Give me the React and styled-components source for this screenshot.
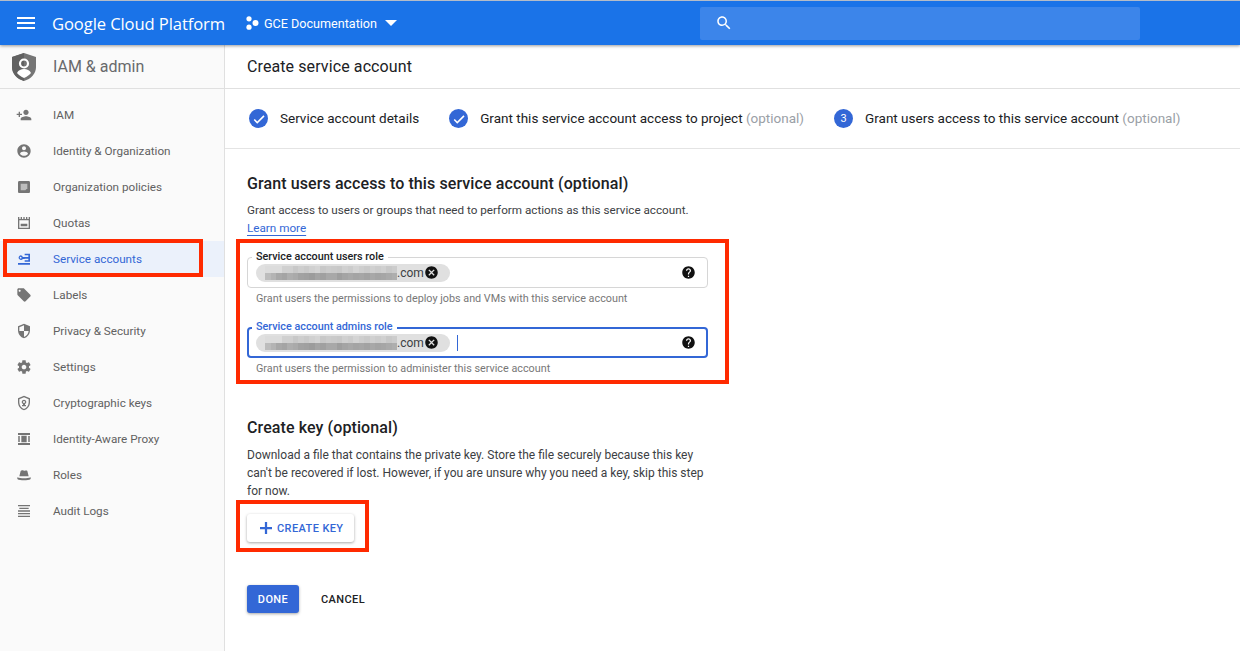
import React from "react";
import styled, { createGlobalStyle } from "styled-components";

const GlobalStyle = createGlobalStyle`
  html, body {
    margin: 0;
    padding: 0;
    background: #fff;
    font-family: Roboto, "Liberation Sans", sans-serif;
    color: #202124;
  }
  * {
    box-sizing: border-box;
  }
`;

const PATHS = {
  menu: "M3 18h18v-2H3v2zm0-5h18v-2H3v2zm0-7v2h18V6H3z",
  search:
    "M15.5 14h-.79l-.28-.27C15.41 12.59 16 11.11 16 9.5 16 5.91 13.09 3 9.5 3S3 5.91 3 9.5 5.91 16 9.5 16c1.61 0 3.09-.59 4.23-1.57l.27.28v.79l5 4.99L20.49 19l-4.99-5zm-6 0C7.01 14 5 11.99 5 9.5S7.01 5 9.5 5 14 7.01 14 9.5 11.99 14 9.5 14z",
  help: "M12 2C6.48 2 2 6.48 2 12s4.48 10 10 10 10-4.48 10-10S17.52 2 12 2zm1 17h-2v-2h2v2zm2.07-7.75l-.9.92C13.45 12.9 13 13.5 13 15h-2v-.5c0-1.1.45-2.1 1.17-2.83l1.24-1.26c.37-.36.59-.86.59-1.41 0-1.1-.9-2-2-2s-2 .9-2 2H8c0-2.21 1.79-4 4-4s4 1.79 4 4c0 .88-.36 1.68-.93 2.25z",
  cancel:
    "M12 2C6.47 2 2 6.47 2 12s4.47 10 10 10 10-4.47 10-10S17.53 2 12 2zm5 13.59L15.59 17 12 13.41 8.41 17 7 15.59 10.59 12 7 8.41 8.41 7 12 10.59 15.59 7 17 8.41 13.41 12 17 15.59z",
  plus: "M20 13.500h-6.500V20h-3v-6.500H4v-3h6.500V4h3v6.500H20v3z",
  check: "M9 16.200L4.800 12l-1.900 1.900L9 20 21.500 7.500l-1.900-1.900L9 16.200z",
  iam: "M15 12c2.21 0 4-1.79 4-4s-1.79-4-4-4-4 1.79-4 4 1.79 4 4 4zm-9-2V7H4v3H1v2h3v3h2v-3h3v-2H6zm9 4c-2.67 0-8 1.34-8 4v2h16v-2c0-2.66-5.33-4-8-4z",
  identity:
    "M12 2C6.48 2 2 6.48 2 12s4.48 10 10 10 10-4.48 10-10S17.52 2 12 2zm0 3c1.66 0 3 1.34 3 3s-1.34 3-3 3-3-1.34-3-3 1.34-3 3-3zm0 14.2c-2.5 0-4.71-1.28-6-3.22.03-1.99 4-3.08 6-3.08 1.99 0 5.97 1.09 6 3.08-1.29 1.94-3.5 3.22-6 3.22z",
  policies:
    "M19 3H5c-1.1 0-2 .9-2 2v14c0 1.1.9 2 2 2h14c1.1 0 2-.9 2-2V5c0-1.1-.9-2-2-2z",
  quotas:
    "M3 3h2v3h2V3h2v3h2V3h2v3h2V3h2v3h2V3h2v18H3V3zm2 5v11h14V8H5zm2 5h10v4H7v-4z",
  service:
    "M3 18h18v2.500H3V18zM13 4h8v12h-8v-2h5.500v-2.500H13V9h5.500V6.500H13V4zM7 6.500a3.500 3.500 0 0 1 3.300 2.500H13v3h-2.700A3.500 3.500 0 1 1 7 6.500zm0 2.200a1.300 1.300 0 1 0 0 2.600 1.300 1.300 0 0 0 0-2.600z",
  labels:
    "M21.41 11.58l-9-9C12.05 2.22 11.55 2 11 2H4c-1.1 0-2 .9-2 2v7c0 .55.22 1.05.59 1.42l9 9c.36.36.86.58 1.41.58.55 0 1.05-.22 1.41-.59l7-7c.37-.36.59-.86.59-1.41 0-.55-.23-1.06-.59-1.42zM5.5 7C4.67 7 4 6.33 4 5.5S4.67 4 5.5 4 7 4.67 7 5.5 6.33 7 5.5 7z",
  privacy:
    "M12 1L3 5v6c0 5.55 3.84 10.74 9 12 5.16-1.26 9-6.45 9-12V5l-9-4zm0 10.99h7c-.53 4.12-3.28 7.79-7 8.94V12H5V6.3l7-3.11v8.8z",
  settings:
    "M19.43 12.98c.04-.32.07-.64.07-.98s-.03-.66-.07-.98l2.11-1.65c.19-.15.24-.42.12-.64l-2-3.46c-.12-.22-.39-.3-.61-.22l-2.49 1c-.52-.4-1.08-.73-1.69-.98l-.38-2.65C14.46 2.18 14.25 2 14 2h-4c-.25 0-.46.18-.49.42l-.38 2.65c-.61.25-1.17.59-1.69.98l-2.49-1c-.23-.09-.49 0-.61.22l-2 3.46c-.13.22-.07.49.12.64l2.11 1.65c-.04.32-.07.65-.07.98s.03.66.07.98l-2.11 1.65c-.19.15-.24.42-.12.64l2 3.46c.12.22.39.3.61.22l2.49-1c.52.4 1.08.73 1.69.98l.38 2.65c.03.24.24.42.49.42h4c.25 0 .46-.18.49-.42l.38-2.65c.61-.25 1.17-.59 1.69-.98l2.49 1c.23.09.49 0 .61-.22l2-3.46c.12-.22.07-.49-.12-.64l-2.11-1.65zM12 15.5c-1.93 0-3.5-1.57-3.5-3.5s1.57-3.5 3.5-3.5 3.5 1.57 3.5 3.5-1.57 3.5-3.5 3.5z",
  crypto:
    "M12 1L3 5v6c0 5.550 3.840 10.740 9 12 5.160-1.260 9-6.450 9-12V5l-9-4zm0 2.200l7 3.100V11c0 4.500-3 8.700-7 9.900-4-1.200-7-5.400-7-9.900V6.300l7-3.100zM12 7a3.500 3.500 0 0 0-1.500 6.660V15H9v2h6v-2h-1.500v-1.340A3.500 3.500 0 0 0 12 7zm0 2a1.500 1.500 0 1 1 0 3 1.500 1.500 0 0 1 0-3z",
  proxy:
    "M3 3h18v3H3V3zm0 15h18v3H3v-3zM3 8h3v2H3V8zm15 0h3v2h-3V8zM3 14h3v2H3v-2zm15 0h3v2h-3v-2zM3 11h3v2H3v-2zm15 0h3v2h-3v-2zM8 7h8v10H8V7z",
  roles:
    "M7 6c1-1.500 3-1 5-.5s4-1 5 .5l2 8H5l2-8zM2 15.500c3 1 6 1.500 10 1.500s7-.5 10-1.500V18c-2 1.500-6 2-10 2s-8-.5-10-2v-2.500z",
  audit:
    "M3 3h18v2H3V3zm2 4h14v2H5V7zm-2 4h18v2H3v-2zm0 4h18v2H3v-2zm0 4h18v2H3v-2z",
};

// lighter second layer, only the policies sheet has one
const OVERLAYS = {
  policies: "M7 7h10v7l-3 3H7V7z",
};

const Icon = ({ name, size = 18, color = "currentColor" }) => (
  <svg width={size} height={size} viewBox="0 0 24 24" fill={color} aria-hidden="true">
    <path d={PATHS[name]} />
    {OVERLAYS[name] && <path d={OVERLAYS[name]} fill="#bdbdbd" />}
  </svg>
);

const NAV_ITEMS = [
  { label: "IAM", icon: "iam" },
  { label: "Identity & Organization", icon: "identity" },
  { label: "Organization policies", icon: "policies" },
  { label: "Quotas", icon: "quotas" },
  { label: "Service accounts", icon: "service", active: true },
  { label: "Labels", icon: "labels" },
  { label: "Privacy & Security", icon: "privacy" },
  { label: "Settings", icon: "settings" },
  { label: "Cryptographic keys", icon: "crypto" },
  { label: "Identity-Aware Proxy", icon: "proxy" },
  { label: "Roles", icon: "roles" },
  { label: "Audit Logs", icon: "audit" },
];

// pixelated redaction over the e-mail address
const MOSAIC = [
  "dcdcdcd0d0c8cecad0d4c8cccac8d0ccd4cecad0ccd0c8cc",
  "bcb4a8a4aeaaa2a09ca4a0a8a89ea4a8a4a6a2a8a4a6aaae",
];

const Page = styled.div`
  width: 1240px;
  height: 651px;
  overflow: hidden;
  display: flex;
  flex-direction: column;
`;

const Header = styled.header`
  position: relative;
  z-index: 2;
  height: 45px;
  flex: none;
  display: flex;
  align-items: center;
  background: #1a73e8;
  border-top: 1px solid #b4bcc8;
  color: #fff;
  box-shadow: 0 1px 3px rgba(0, 0, 0, 0.4);
`;

const MenuButton = styled.div`
  width: 52px;
  display: flex;
  justify-content: center;
`;

const Brand = styled.div`
  width: 193px;
  font-family: "Open Sans", Roboto, sans-serif;
  font-size: 16.6px;
  white-space: nowrap;
  letter-spacing: -0.1px;
`;

const ProjectPicker = styled.div`
  width: 455px;
  display: flex;
  align-items: center;
  font-size: 12.6px;
`;

const ProjectName = styled.span`
  margin-left: 5px;
`;

const Caret = styled.span`
  margin-left: 8px;
  width: 0;
  height: 0;
  border-left: 6.500px solid transparent;
  border-right: 6.500px solid transparent;
  border-top: 6.500px solid #fff;
`;

const SearchBox = styled.div`
  width: 440px;
  height: 33px;
  display: flex;
  align-items: center;
  padding-left: 15px;
  background: #3c85ea;
  border-radius: 2px;
`;

const Body = styled.div`
  flex: 1;
  display: flex;
  min-height: 0;
`;

const Sidebar = styled.aside`
  width: 225px;
  flex: none;
  background: #fafafa;
  border-right: 1px solid #e0e0e0;
`;

const SideTitle = styled.div`
  height: 44px;
  display: flex;
  align-items: center;
  padding-left: 12px;
  gap: 17px;
  font-size: 16px;
  color: #68696c;
  border-bottom: 1px solid #e0e0e0;
`;

const NavList = styled.nav`
  padding-top: 8px;
`;

const NavItem = styled.div`
  position: relative;
  height: 36px;
  display: flex;
  align-items: center;
  padding-left: 16px;
  gap: 21px;
  font-size: 11.7px;
  color: ${(p) => (p.$active ? "#3367d6" : "#616161")};
  background: ${(p) => (p.$active ? "#ebf1fb" : "transparent")};
`;

const NavMark = styled.span`
  position: absolute;
  left: 3px;
  top: -2px;
  bottom: 0;
  width: 200px;
  border: 4px solid #ff2a00;
`;

const Main = styled.main`
  flex: 1;
  min-width: 0;
`;

const TitleBar = styled.div`
  height: 44px;
  display: flex;
  align-items: center;
  padding-left: 22px;
  font-size: 16px;
  letter-spacing: 0.1px;
  color: #202124;
  border-bottom: 1px solid #e0e0e0;
`;

const Stepper = styled.div`
  height: 60px;
  display: flex;
  align-items: center;
  gap: 30px;
  padding-left: 24px;
  border-bottom: 1px solid #e4e4e4;
  font-size: 13.5px;
  color: #202124;
`;

const Step = styled.div`
  display: flex;
  align-items: center;
  gap: 12px;
  white-space: nowrap;
`;

const StepLabel = styled.span`
  margin-bottom: 2px;
`;

const StepCircle = styled.span`
  width: 19px;
  height: 19px;
  border-radius: 50%;
  background: #3367d6;
  color: #fff;
  font-size: 11px;
  display: flex;
  align-items: center;
  justify-content: center;
`;

const Optional = styled.span`
  color: #9aa0a6;
`;

const Form = styled.div`
  padding: 25px 0 0 22px;
  width: 490px;
`;

const Heading = styled.h2`
  margin: ${(p) => p.$top || 0}px 0 8px;
  font-size: 16px;
  line-height: 20px;
  font-weight: 500;
  letter-spacing: 0.1px;
  color: #202124;
`;

const Text = styled.p`
  margin: 0;
  font-size: 12px;
  line-height: 18px;
  color: #3c4043;
  width: 460px;
`;

const IntroText = styled(Text)`
  margin-top: -1px;
  font-size: 11.7px;
`;

const LearnLink = styled.a`
  color: #3367d6;
  text-decoration: underline;
  text-underline-offset: 3px;
`;

const Mark = styled.div`
  border: 4px solid #ff2a00;
  margin-left: -11px;
  padding-left: 7px;
  width: ${(p) => p.$width}px;
`;

const FieldsMark = styled(Mark)`
  margin-top: 2px;
  padding-top: 14px;
  padding-bottom: 4px;
`;

const ButtonMark = styled(Mark)`
  padding-top: 10px;
  padding-bottom: 6px;
`;

const Field = styled.div`
  position: relative;
  width: 461px;
  height: 31px;
  display: flex;
  align-items: center;
  padding: 0 ${(p) => (p.$focused ? 10 : 11)}px 0 ${(p) => (p.$focused ? 7 : 8)}px;
  border-radius: 4px;
  border: ${(p) => (p.$focused ? "2px solid #3367d6" : "1px solid #d6d6d6")};
  margin-top: ${(p) => (p.$focused ? 21 : 0)}px;
`;

const FieldLabel = styled.span`
  position: absolute;
  left: ${(p) => (p.$focused ? 3 : 4)}px;
  top: ${(p) => (p.$focused ? -8 : -7)}px;
  padding: 0 4px;
  background: #fff;
  font-size: 10.8px;
  line-height: 12px;
  font-weight: 500;
  white-space: nowrap;
  color: ${(p) => (p.$focused ? "#3367d6" : "#202124")};
`;

const Chip = styled.div`
  width: 194px;
  height: 18px;
  display: flex;
  align-items: center;
  padding-left: 9px;
  border-radius: 9px;
  background: #e0e0e0;
  font-size: 12px;
  color: #3c4043;
`;

const Mosaic = styled.div`
  width: 132px;
  height: 14px;
  flex: none;
  display: grid;
  grid-template-columns: repeat(24, 1fr);
  grid-template-rows: 1fr 1fr;
`;

const MosaicCell = styled.span`
  background: ${(p) => p.$shade};
`;

const ChipClose = styled.span`
  display: flex;
  margin-left: 0;
`;

const Cursor = styled.span`
  width: 1px;
  height: 16px;
  margin-left: 7px;
  background: #3367d6;
`;

const HelpIcon = styled.span`
  margin-left: auto;
  display: flex;
`;

const Hint = styled.div`
  margin-top: 4px;
  padding-left: 9px;
  font-size: 10.8px;
  line-height: 14px;
  color: #777;
`;

const Button = styled.button`
  height: 28px;
  display: inline-flex;
  align-items: center;
  border: 0;
  border-radius: 3px;
  font-family: inherit;
  font-size: 11px;
  font-weight: 500;
  letter-spacing: 0.4px;
  cursor: pointer;
`;

const RaisedButton = styled(Button)`
  width: 107px;
  padding: 0 0 0 10px;
  gap: 2px;
  background: #fff;
  color: #3367d6;
  box-shadow: 0 1px 3px rgba(0, 0, 0, 0.35);
`;

const PrimaryButton = styled(Button)`
  width: 52px;
  justify-content: center;
  background: #3367d6;
  color: #fff;
  box-shadow: 0 1px 3px rgba(0, 0, 0, 0.35);
`;

const TextButton = styled(Button)`
  padding: 0;
  background: transparent;
  color: #202124;
`;

const Actions = styled.div`
  display: flex;
  align-items: center;
  gap: 22px;
  margin-top: 33px;
`;

const Email = () => (
  <Chip>
    <Mosaic>
      {MOSAIC.map((row, r) =>
        row
          .match(/../g)
          .map((v, c) => <MosaicCell key={`${r}-${c}`} $shade={`#${v}${v}${v}`} />)
      )}
    </Mosaic>
    .com
    <ChipClose>
      <Icon name="cancel" size={15} color="#111" />
    </ChipClose>
  </Chip>
);

const RoleField = ({ label, hint, focused }) => (
  <>
    <Field $focused={focused}>
      <FieldLabel $focused={focused}>{label}</FieldLabel>
      <Email />
      {focused && <Cursor />}
      <HelpIcon>
        <Icon name="help" size={15} color="#111" />
      </HelpIcon>
    </Field>
    <Hint>{hint}</Hint>
  </>
);

const ShieldLogo = () => (
  <svg width="24" height="28" viewBox="0 0 24 28" aria-hidden="true">
    <path d="M12 0L0 4v10c0 6.500 5 12 12 14 7-2 12-7.500 12-14V4L12 0z" fill="#757575" />
    <path d="M12 0L0 4v10c0 6.500 5 12 12 14V0z" fill="#616161" />
    <circle cx="12" cy="10.500" r="4" fill="none" stroke="#fff" strokeWidth="2.200" />
    <path d="M5 20c1.500-3 4-4 7-4s5.500 1 7 4c-1.800 2.200-4 3.800-7 5-3-1.200-5.200-2.800-7-5z" fill="#fff" />
  </svg>
);

const ProjectDots = () => (
  <svg width="14" height="14" viewBox="0 0 14 14" fill="#fff" aria-hidden="true">
    <circle cx="4" cy="2.800" r="2.600" />
    <circle cx="4" cy="11.200" r="2.600" />
    <circle cx="10.500" cy="7" r="3" />
  </svg>
);

export default function App() {
  return (
    <Page>
      <GlobalStyle />
      <Header>
        <MenuButton>
          <Icon name="menu" size={24} />
        </MenuButton>
        <Brand>Google Cloud Platform</Brand>
        <ProjectPicker>
          <ProjectDots />
          <ProjectName>GCE Documentation</ProjectName>
          <Caret />
        </ProjectPicker>
        <SearchBox>
          <Icon name="search" size={18} />
        </SearchBox>
      </Header>
      <Body>
        <Sidebar>
          <SideTitle>
            <ShieldLogo />
            IAM &amp; admin
          </SideTitle>
          <NavList>
            {NAV_ITEMS.map((item) => (
              <NavItem key={item.label} $active={item.active}>
                <Icon name={item.icon} size={16} color={item.active ? "#3367d6" : "#757575"} />
                {item.label}
                {item.active && <NavMark />}
              </NavItem>
            ))}
          </NavList>
        </Sidebar>
        <Main>
          <TitleBar>Create service account</TitleBar>
          <Stepper>
            <Step>
              <StepCircle>
                <Icon name="check" size={14} />
              </StepCircle>
              <StepLabel>Service account details</StepLabel>
            </Step>
            <Step>
              <StepCircle>
                <Icon name="check" size={14} />
              </StepCircle>
              <StepLabel>
                Grant this service account access to project <Optional>(optional)</Optional>
              </StepLabel>
            </Step>
            <Step>
              <StepCircle>3</StepCircle>
              <StepLabel>
                Grant users access to this service account <Optional>(optional)</Optional>
              </StepLabel>
            </Step>
          </Stepper>
          <Form>
            <Heading>Grant users access to this service account (optional)</Heading>
            <IntroText>
              Grant access to users or groups that need to perform actions as this service account.
              <br />
              <LearnLink>Learn more</LearnLink>
            </IntroText>
            <FieldsMark $width={493}>
              <RoleField
                label="Service account users role"
                hint="Grant users the permissions to deploy jobs and VMs with this service account"
              />
              <RoleField
                focused
                label="Service account admins role"
                hint="Grant users the permission to administer this service account"
              />
            </FieldsMark>
            <Heading $top={34}>Create key (optional)</Heading>
            <Text>
              Download a file that contains the private key. Store the file securely because this key
              can't be recovered if lost. However, if you are unsure why you need a key, skip this step
              for now.
            </Text>
            <ButtonMark $width={133}>
              <RaisedButton>
                <Icon name="plus" size={18} />
                CREATE KEY
              </RaisedButton>
            </ButtonMark>
            <Actions>
              <PrimaryButton>DONE</PrimaryButton>
              <TextButton>CANCEL</TextButton>
            </Actions>
          </Form>
        </Main>
      </Body>
    </Page>
  );
}
